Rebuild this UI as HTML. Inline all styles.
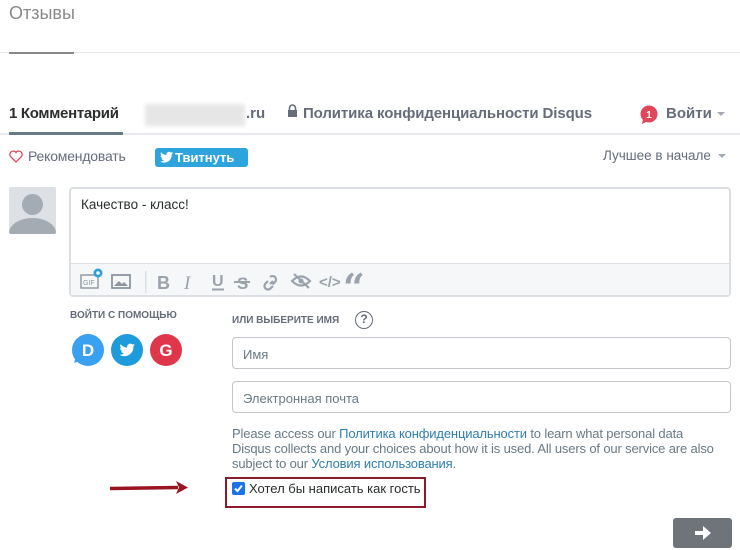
<!DOCTYPE html>
<html><head><meta charset="utf-8"><style>
*{margin:0;padding:0;box-sizing:border-box}
body{width:740px;height:550px;background:#fff;font-family:"Liberation Sans",sans-serif;position:relative;overflow:hidden;color:#2a2e2e}
.a{position:absolute;white-space:nowrap}
.in{position:absolute;left:232px;width:499px;height:32px;border:1px solid #c2c6cc;border-radius:4px;font-size:13px;color:#687a86;padding:9px 10px}
a{color:#2e7fb0;text-decoration:none}
</style></head><body>
<div class="a" style="left:9px;top:3px;font-size:18px;color:#8a8a8a">Отзывы</div>
<div class="a" style="left:0;top:52px;width:740px;height:1px;background:#e7e7e7"></div>
<div class="a" style="left:9px;top:52px;width:65px;height:2px;background:#888"></div>

<div class="a" style="left:9px;top:105px;font-size:15px;font-weight:bold;color:#2a2e2e;letter-spacing:-0.3px">1 Комментарий</div>
<div class="a" style="left:145px;top:104px;width:100px;height:22px;background:#e6e6e6;filter:blur(2px)"></div>
<div class="a" style="left:246px;top:105px;font-size:15px;font-weight:bold;color:#656c7a">.ru</div>
<svg class="a" style="left:287px;top:104px" width="11" height="14"><path d="M2.5 6V4a3 3 0 0 1 6 0v2" stroke="#656c7a" stroke-width="1.6" fill="none"/><rect x="1" y="6" width="9" height="7" fill="#656c7a"/></svg>
<div class="a" style="left:303px;top:105px;font-size:15px;font-weight:bold;color:#656c7a;letter-spacing:-0.1px">Политика конфиденциальности Disqus</div>
<svg class="a" style="left:640px;top:105px" width="20" height="20"><circle cx="9" cy="9" r="8.5" fill="#e0475a"/><path d="M3 14 L2 19 L8 16Z" fill="#e0475a"/><text x="9" y="13" font-size="10" font-weight="bold" fill="#fff" text-anchor="middle" font-family="Liberation Sans">1</text></svg>
<div class="a" style="left:666px;top:105px;font-size:15px;font-weight:bold;color:#656c7a">Войти</div>
<div class="a" style="left:717px;top:112px;border:4px solid transparent;border-top:4px solid #a3aab3"></div>
<div class="a" style="left:0;top:133px;width:740px;height:2px;background:#e7e9ee"></div>
<div class="a" style="left:9px;top:132px;width:114px;height:3px;background:#687a86"></div>

<svg class="a" style="left:9px;top:150px" width="14" height="13"><path d="M7 12 L1.5 6.5 A3 3 0 0 1 7 2.5 A3 3 0 0 1 12.5 6.5Z" fill="none" stroke="#e0475a" stroke-width="1.3"/></svg>
<div class="a" style="left:28px;top:148px;font-size:14px;color:#656c7a;letter-spacing:-0.2px">Рекомендовать</div>
<div class="a" style="left:155px;top:148px;width:93px;height:19px;background:#2ea4dd;border-radius:3px;color:#fff;font-size:13px;font-weight:bold;padding:2px 0 0 20px">Твитнуть</div>
<svg class="a" style="left:160px;top:151px" width="14" height="12"><path d="M13 2c-.5.2-1 .4-1.5.4.6-.3 1-.9 1.2-1.5-.5.3-1.1.5-1.7.7a2.7 2.7 0 0 0-4.6 2.4C4.2 3.900 2.300 2.900 1 1.300c-.7 1.200-.3 2.800.8 3.600-.4 0-.9-.1-1.200-.3 0 1.300.9 2.400 2.100 2.700-.4.1-.8.1-1.200.1.3 1.100 1.400 1.900 2.600 1.900A5.400 5.400 0 0 1 0 10.400 7.600 7.600 0 0 0 11.700 3.800V3.500c.5-.4.9-.9 1.300-1.500z" fill="#fff"/></svg>
<div class="a" style="left:603px;top:148px;font-size:13.5px;color:#656c7a">Лучшее в начале</div>
<div class="a" style="left:718px;top:154px;border:4px solid transparent;border-top:4px solid #a3aab3"></div>

<div class="a" style="left:9px;top:187px;width:47px;height:47px;background:#dde1e6;overflow:hidden;border-radius:2px">
<div class="a" style="left:13px;top:7px;width:21px;height:21px;border-radius:50%;background:#a5abb3"></div>
<div class="a" style="left:0px;top:31px;width:47px;height:30px;border-radius:50% 50% 0 0;background:#a5abb3"></div></div>

<div class="a" style="left:69px;top:187px;width:662px;height:110px;border:2px solid #dbdfe4;border-radius:4px;background:#fff"></div>
<div class="a" style="left:71px;top:263px;width:658px;height:32px;background:#f6f7f8;border-top:1px solid #dbdfe4"></div>
<div class="a" style="left:81px;top:197px;font-size:13.5px;color:#2a2e2e">Качество - класс!</div>
<svg class="a" style="left:78px;top:268px" width="300" height="26">
<rect x="3" y="7" width="17" height="13" fill="none" stroke="#8c959f" stroke-width="1.4"/><text x="5" y="17" font-size="7" fill="#8c959f" font-family="Liberation Sans">GIF</text>
<circle cx="20" cy="5" r="4.5" fill="#2e9fdb"/><circle cx="20" cy="5" r="1.8" fill="#fff"/>
<rect x="34" y="7" width="18" height="13" fill="none" stroke="#8c959f" stroke-width="1.8"/><path d="M36 18 L41 13 L44 16 L46 14 L50 18Z" fill="#8c959f"/>
<rect x="67" y="3" width="1.5" height="22" fill="#dbdfe4"/>
<text x="79" y="21" font-size="18" font-weight="bold" fill="#9aa3ad" font-family="Liberation Sans">B</text>
<text x="106" y="21" font-size="19" font-style="italic" fill="#9aa3ad" font-family="Liberation Serif">I</text>
<text x="134" y="18" font-size="16" font-weight="bold" fill="#9aa3ad" font-family="Liberation Sans">U</text><rect x="134" y="20.5" width="12" height="2" fill="#9aa3ad"/>
<text x="159" y="21" font-size="17" font-weight="bold" fill="#9aa3ad" font-family="Liberation Sans">S</text><rect x="156" y="13" width="16" height="2" fill="#9aa3ad"/>
<path d="M192 9 a3.5 3.5 0 0 1 5 5 l-2.5 2.5 M190 13 l-2.5 2.5 a3.5 3.5 0 0 0 5 5 l2.5 -2.5 M192 16 l3 -3" fill="none" stroke="#9aa3ad" stroke-width="2.2"/>
<path d="M214 13 Q223 4 232 13 Q223 22 214 13Z" fill="none" stroke="#9aa3ad" stroke-width="2.2"/><circle cx="223" cy="13" r="2.5" fill="#9aa3ad"/><line x1="216" y1="6" x2="231" y2="20" stroke="#9aa3ad" stroke-width="2.2"/>
<text x="241" y="19" font-size="15" font-weight="bold" fill="#9aa3ad" font-family="Liberation Sans">&lt;/&gt;</text>
<text x="265" y="33" font-size="38" font-weight="bold" fill="#9aa3ad" font-family="DejaVu Serif">“</text>
</svg>

<div class="a" style="left:70px;top:310px;font-size:10px;font-weight:bold;color:#656c7a">ВОЙТИ С ПОМОЩЬЮ</div>
<svg class="a" style="left:70px;top:333px" width="116" height="36">
<circle cx="18" cy="17" r="16" fill="#3aa0f0"/><path d="M4 30 L6 24 L10 28Z" fill="#3aa0f0"/><text x="18" y="23" font-size="17" font-weight="bold" fill="#fff" text-anchor="middle" font-family="Liberation Sans">D</text>
<circle cx="57" cy="17" r="16" fill="#1d9bdb"/><path d="M65 12c-.6.3-1.2.4-1.8.5.7-.4 1.1-1 1.400-1.700-.6.400-1.300.600-2 .800a3.200 3.200 0 0 0-5.400 2.900c-2.600-.1-5-1.400-6.600-3.300-.9 1.400-.4 3.300.9 4.200-.5 0-1-.2-1.400-.4 0 1.500 1.100 2.800 2.500 3.100-.5.100-1 .2-1.400.1.4 1.300 1.600 2.200 3 2.200a6.400 6.400 0 0 1-4.700 1.300 9 9 0 0 0 13.900-8v-.4c.6-.4 1.100-1 1.500-1.600z" fill="#fff"/>
<circle cx="96" cy="17" r="16" fill="#e0364a"/><text x="96" y="23" font-size="17" font-weight="bold" fill="#fff" text-anchor="middle" font-family="Liberation Sans">G</text>
</svg>

<div class="a" style="left:232px;top:315px;font-size:10px;font-weight:bold;color:#656c7a">ИЛИ ВЫБЕРИТЕ ИМЯ</div>
<div class="a" style="left:355px;top:311px;width:18px;height:18px;border:1.5px solid #656c7a;border-radius:50%;font-size:12px;font-weight:bold;color:#656c7a;text-align:center;line-height:15px">?</div>
<div class="in" style="top:337px">Имя</div>
<div class="in" style="top:381px">Электронная почта</div>
<div class="a" style="left:232px;top:426px;font-size:13px;line-height:15px;color:#687a86;letter-spacing:-0.15px">Please access our <a>Политика конфиденциальности</a> to learn what personal data<br>Disqus collects and your choices about how it is used. All users of our service are also<br>subject to our <a>Условия использования</a>.</div>

<div class="a" style="left:225px;top:477px;width:201px;height:31px;border:2px solid #8b1a2a"></div>
<div class="a" style="left:232px;top:482px;width:13px;height:13px;background:#1a73e8;border-radius:2px"></div>
<svg class="a" style="left:232px;top:482px" width="13" height="13"><path d="M3 6.5 L5.5 9 L10 3.5" stroke="#fff" stroke-width="2" fill="none"/></svg>
<div class="a" style="left:249px;top:481px;font-size:13px;color:#2a2e2e">Хотел бы написать как гость</div>

<svg class="a" style="left:108px;top:480px" width="82" height="16"><path d="M2 8.5 L70 7.5" stroke="#9a1422" stroke-width="3.5"/><path d="M68 1 L80 7.5 L68 14 L71 7.5Z" fill="#9a1422"/></svg>

<div class="a" style="left:673px;top:518px;width:59px;height:30px;background:#6e7479;border-radius:3px"></div>
<svg class="a" style="left:693px;top:524px" width="20" height="18"><path d="M2 7 H10 V2 L18 9 L10 16 V11 H2Z" fill="#fff"/></svg>
</body></html>
